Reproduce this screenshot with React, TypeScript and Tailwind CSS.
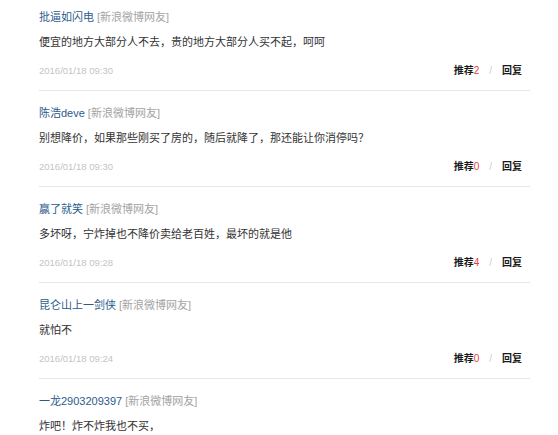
type CommentType = {
  name: string;
  content: string;
  time?: string;
  likes?: number;
};

const COMMENT_LIST: CommentType[] = [
  {
    name: "批逼如闪电",
    content: "便宜的地方大部分人不去，贵的地方大部分人买不起，呵呵",
    time: "2016/01/18 09:30",
    likes: 2,
  },
  {
    name: "陈浩deve",
    content: "别想降价，如果那些刚买了房的，随后就降了，那还能让你消停吗？",
    time: "2016/01/18 09:30",
    likes: 0,
  },
  {
    name: "赢了就笑",
    content: "多坏呀，宁炸掉也不降价卖给老百姓，最坏的就是他",
    time: "2016/01/18 09:28",
    likes: 4,
  },
  {
    name: "昆仑山上一剑侠",
    content: "就怕不",
    time: "2016/01/18 09:24",
    likes: 0,
  },
  {
    // last one is cut by the bottom of the viewport
    name: "一龙2903209397",
    content: "炸吧！炸不炸我也不买，",
  },
];

const CommentItem = (item: CommentType) => {
  return (
    <div className="flex flex-col pt-[12px] first:pt-[7px] pb-[9px] border-b border-[#e6e6e6]">
      <div className="h-[20px] leading-[20px] text-[11px] whitespace-nowrap">
        <span className="text-[#2b5b8c]">{item.name}</span>
        <span className="text-[#a3a3a3] ml-[3px]">[新浪微博网友]</span>
      </div>
      <div className="h-[20px] leading-[20px] mt-[5px] text-[11px] text-[#333] whitespace-nowrap">
        {item.content}
      </div>
      {item.time && (
        <div className="h-[20px] leading-[20px] mt-[9px] flex items-center justify-between">
          <span className="text-[9.5px] text-[#c4c4c4]">{item.time}</span>
          <div className="flex items-center text-[10px] text-[#1a1a1a] pr-[8px]">
            <span className="font-semibold">
              推荐<span className="text-[#e4393c] font-normal">{item.likes}</span>
            </span>
            <span className="text-[#d0d0d0] mx-[10px]">/</span>
            <span className="font-semibold">回复</span>
          </div>
        </div>
      )}
    </div>
  );
};

const App = () => {
  return (
    <div
      className="w-[558px] h-[435px] overflow-hidden bg-white"
      style={{ fontFamily: '"Liberation Sans", Arial, "Noto Sans CJK SC", sans-serif' }}
    >
      <div className="ml-[39px] w-[491px] flex flex-col">
        {COMMENT_LIST.map((item, key) => (
          <CommentItem key={key} {...item} />
        ))}
      </div>
    </div>
  );
};

export default App;
